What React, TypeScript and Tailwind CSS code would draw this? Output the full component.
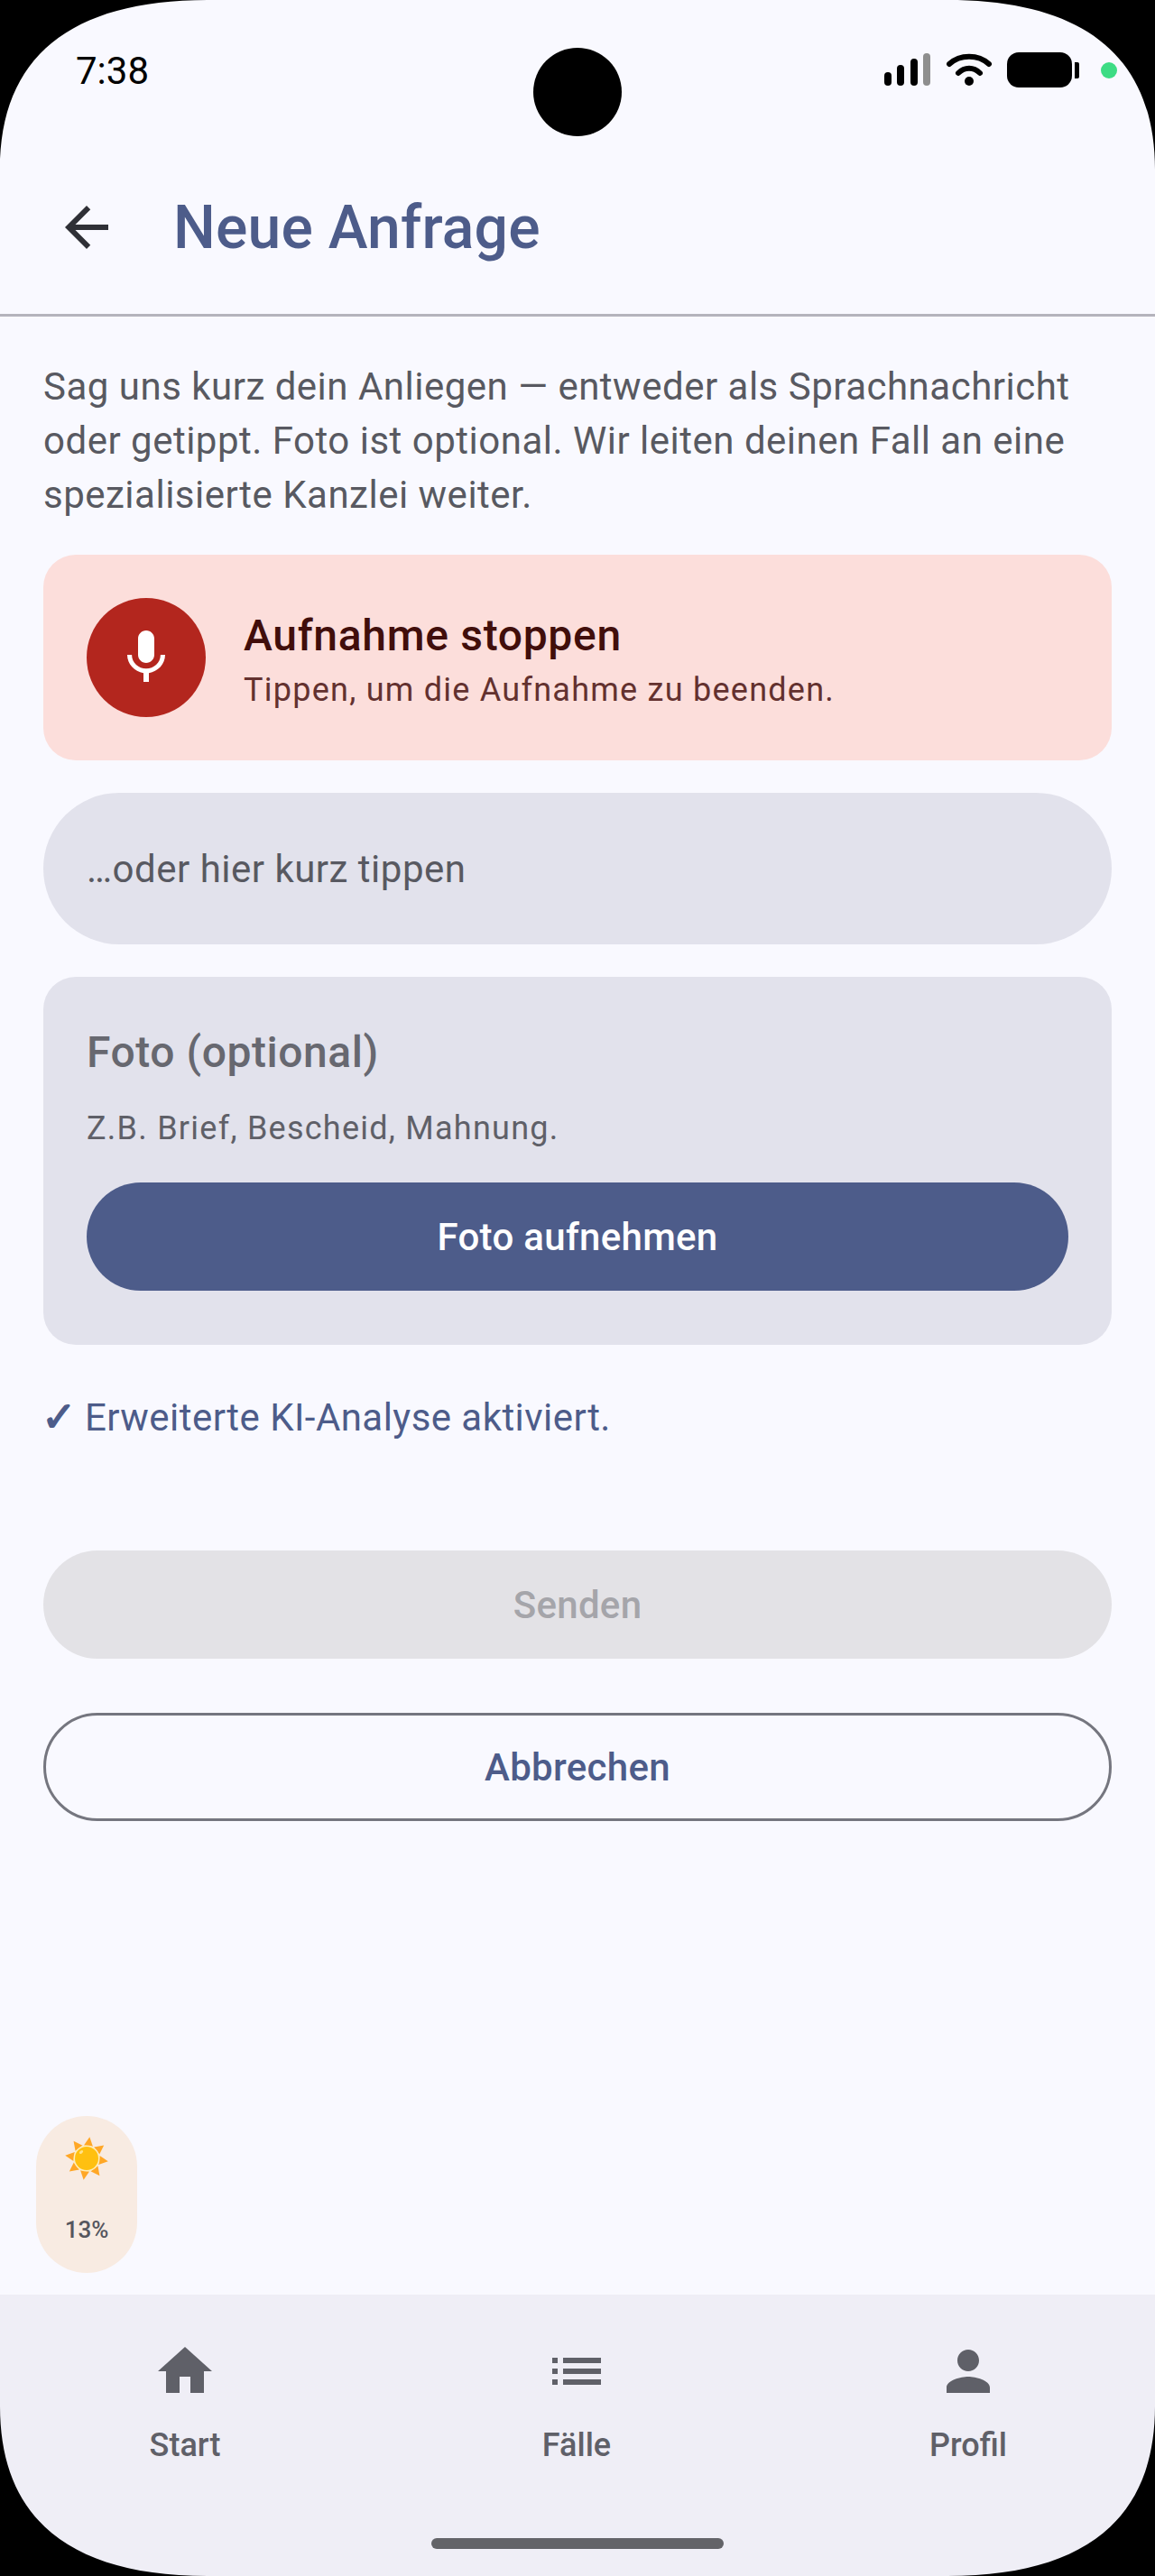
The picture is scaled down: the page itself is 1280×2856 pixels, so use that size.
import type { ReactNode } from "react";

const rays = [8, 53, 98, 143, 188, 233, 278, 323];

function SunIcon() {
  return (
    <svg viewBox="0 0 50 50" className="h-[50px] w-[50px]">
      {rays.map((angle) => (
        <polygon key={angle} points="20,11 25,1 30,11" fill="#ffa726" transform={`rotate(${angle} 25 25)`} />
      ))}
      <circle cx="25" cy="25" r="14.5" fill="#ffeeb8" />
      <circle cx="25" cy="25" r="13" fill="#ffc010" />
      <ellipse cx="19" cy="18" rx="2.5" ry="1.5" fill="#ffe28a" transform="rotate(-40 19 18)" />
    </svg>
  );
}

function Icon({ d, className }: { d: string; className: string }) {
  return (
    <svg viewBox="0 0 24 24" className={className} fill="currentColor">
      <path d={d} />
    </svg>
  );
}

function StatusIcons() {
  return (
    <div className="flex items-center">
      <svg viewBox="0 0 52 38" className="h-[38px] w-[52px]">
        <rect x="0" y="21" width="8" height="15" rx="4" fill="#000" />
        <rect x="14" y="13" width="8" height="23" rx="4" fill="#000" />
        <rect x="29" y="6" width="8" height="30" rx="4" fill="#000" />
        <rect x="43" y="0" width="8" height="36" rx="4" fill="#8e8e8e" />
      </svg>
      <svg viewBox="0 0 50 38" className="ml-[17px] h-[38px] w-[50px]">
        <path d="M3 12C15 1 35 1 47 12" fill="none" stroke="#000" strokeWidth="6" strokeLinecap="round" />
        <path d="M13 22C20 15 30 15 37 22" fill="none" stroke="#000" strokeWidth="6" strokeLinecap="round" />
        <circle cx="25" cy="31" r="5" fill="#000" />
      </svg>
      <div className="ml-[17px] h-[39px] w-[72px] rounded-[13px] bg-black" />
      <div className="ml-[3px] h-[18px] w-[5px] rounded-r-[2px] bg-black" />
      <div className="ml-[24px] h-[18px] w-[18px] rounded-full bg-[#3ddc84]" />
    </div>
  );
}

function NavItem({ d, label }: { d: string; label: string }) {
  return (
    <div className="flex flex-col items-center text-[#5f6068]">
      <Icon d={d} className="h-[72px] w-[72px]" />
      <span className="mt-[22px] text-[36px] font-medium leading-[48px]">{label}</span>
    </div>
  );
}

function PrimaryButton({ className, children }: { className: string; children: ReactNode }) {
  return (
    <button className={`flex h-[120px] w-full items-center justify-center rounded-full text-[42px] font-medium tracking-[0.3px] ${className}`}>
      {children}
    </button>
  );
}

export default function App() {
  return (
    <div className="relative h-[2856px] w-[1280px] overflow-hidden bg-[#f9f9ff] font-['Roboto',sans-serif]">
      <div className="flex h-full w-full flex-col">
        <div className="flex h-[156px] items-start justify-between pl-[84px] pr-[42px] pt-[54px]">
          <span className="text-[42px] leading-[50px] text-black">7:38</span>
          <div className="pt-[4px]">
            <StatusIcons />
          </div>
        </div>

        <header className="flex h-[192px] items-center pl-[60px]">
          <Icon d="M20 11H7.83l5.59-5.59L12 4l-8 8 8 8 1.41-1.41L7.83 13H20v-2z" className="h-[72px] w-[72px] text-[#2f3036]" />
          <h1 className="ml-[60px] mt-[2px] text-[66px] font-medium leading-[80px] tracking-[0.2px] text-[#4d5c8a]">Neue Anfrage</h1>
        </header>
        <div className="h-[3px] bg-[#b5b4bc]" />

        <main className="flex flex-1 flex-col px-12 pt-[48px]">
          <p className="text-[42px] leading-[60px] tracking-[0.5px] text-[#585961]">
            Sag uns kurz dein Anliegen — entweder als Sprachnachricht oder getippt. Foto ist optional. Wir leiten deinen Fall an eine spezialisierte Kanzlei weiter.
          </p>

          <div className="mt-9 flex items-center gap-[42px] rounded-[36px] bg-[#fcdedb] p-12">
            <div className="flex h-[132px] w-[132px] items-center justify-center rounded-full bg-[#b3261e] text-white">
              <Icon
                d="M12 14c1.66 0 3-1.34 3-3V5c0-1.66-1.34-3-3-3S9 3.34 9 5v6c0 1.66 1.34 3 3 3zm5.3-3c0 3-2.54 5.1-5.3 5.1S6.7 14 6.7 11H5c0 3.41 2.72 6.23 6 6.72V21h2v-3.28c3.28-.48 6-3.3 6-6.72h-1.7z"
                className="h-[72px] w-[72px]"
              />
            </div>
            <div className="flex flex-col pt-[6px]">
              <span className="text-[48px] font-medium leading-[60px] tracking-[0.7px] text-[#410e0b]">Aufnahme stoppen</span>
              <span className="mt-[6px] text-[36px] leading-[48px] tracking-[1.25px] text-[#63312f]">Tippen, um die Aufnahme zu beenden.</span>
            </div>
          </div>

          <div className="mt-9 flex h-[168px] items-center rounded-full bg-[#e2e2ec] px-12 text-[42px] tracking-[0.5px] text-[#585961]">
            …oder hier kurz tippen
          </div>

          <div className="mt-9 flex flex-col rounded-[36px] bg-[#e2e2ec] px-12 pb-[60px] pt-12">
            <span className="text-[48px] font-medium leading-[72px] tracking-[0.55px] text-[#676870]">Foto (optional)</span>
            <span className="mt-6 text-[36px] leading-[48px] tracking-[1.25px] text-[#5f6068]">Z.B. Brief, Bescheid, Mahnung.</span>
            <PrimaryButton className="mt-9 bg-[#4d5c8a] text-white">Foto aufnehmen</PrimaryButton>
          </div>

          <p className="mt-[50px] flex h-[60px] items-center text-[42px] tracking-[0.45px] text-[#4d5c8a]">
            <span className="-ml-[2px] w-[48px] font-['DejaVu_Sans'] text-[46px] leading-[60px] [-webkit-text-stroke:1.5px_#4d5c8a]">✓</span>
            Erweiterte KI-Analyse aktiviert.
          </p>

          <PrimaryButton className="mt-[118px] bg-[#e3e2e6] text-[#a5a5aa]">Senden</PrimaryButton>
          <PrimaryButton className="mt-[60px] border-[3px] border-[#75767f] text-[#4d5c8a]">Abbrechen</PrimaryButton>
        </main>

        <nav className="flex h-[312px] flex-col items-center bg-[#efeef6] pt-[49px]">
          <div className="grid w-full grid-cols-3 gap-[134px] pl-[55px] pr-[57px]">
            <NavItem d="M10 20v-6h4v6h5v-8h3L12 3 2 12h3v8z" label="Start" />
            <NavItem d="M3 13h2v-2H3v2zm0 4h2v-2H3v2zm0-8h2V7H3v2zm4 4h14v-2H7v2zm0 4h14v-2H7v2zM7 7v2h14V7H7z" label="Fälle" />
            <NavItem d="M12 12c2.21 0 4-1.79 4-4s-1.79-4-4-4-4 1.79-4 4 1.79 4 4 4zm0 2c-2.67 0-8 1.34-8 4v2h16v-2c0-2.66-5.33-4-8-4z" label="Profil" />
          </div>
          <div className="mt-[79px] h-3 w-[324px] rounded-full bg-[#636368]" />
        </nav>
      </div>

      {/* Schwebende Akku-Anzeige */}
      <div className="absolute left-10 top-[2346px] flex h-[174px] w-[112px] flex-col items-center rounded-[56px] bg-[#f8ebe2] pt-[22px]">
        <SunIcon />
        <span className="mt-[38px] text-[26px] font-medium leading-[32px] text-[#55565e]">13%</span>
      </div>

      {/* Kamera-Loch */}
      <div className="absolute left-[591px] top-[53px] h-[98px] w-[98px] rounded-full bg-black" />

      {/* Geräteecken */}
      <svg viewBox="0 0 1280 2856" className="pointer-events-none absolute inset-0 h-full w-full" fill="#000">
        <path d="M0 0V188C0 64 77 0 230 0Z" />
        <path d="M1280 0V188C1280 64 1203 0 1050 0Z" />
        <path d="M0 2856V2668C0 2792 77 2856 230 2856Z" />
        <path d="M1280 2856V2668C1280 2792 1203 2856 1050 2856Z" />
      </svg>
    </div>
  );
}
